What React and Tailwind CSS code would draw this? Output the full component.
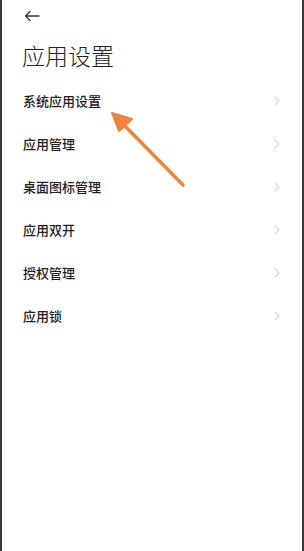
export default function App() {
  const items = ["系统应用设置", "应用管理", "桌面图标管理", "应用双开", "授权管理", "应用锁"];
  return (
    <div className="relative w-[304px] h-[551px] bg-white border-l-2 border-r-2 border-[#3a3a3a] overflow-hidden" style={{ fontFamily: '"Noto Sans CJK SC", "Noto Sans", sans-serif' }}>
      <div className="pl-[22px] pt-[10px] h-[14px] box-content">
        <svg width="16" height="12" viewBox="0 0 16 12" fill="none" stroke="#333" strokeWidth="1.3" strokeLinecap="round" strokeLinejoin="round">
          <path d="M15 6H1.5M6 1.5L1.5 6L6 10.5" />
        </svg>
      </div>
      <div className="pl-[20px] pt-[14px] text-[23px] leading-[34px] font-light text-[#222]">应用设置</div>
      <div className="mt-[7px]">
        {items.map((t) => (
          <div key={t} className="flex items-center justify-between h-[43px] pl-[21px] pr-[22px]">
            <span className="text-[13px] font-medium text-[#222]">{t}</span>
            <svg width="6" height="10" viewBox="0 0 6 10" fill="none" stroke="#c4c4c4" strokeWidth="1" strokeLinecap="round" strokeLinejoin="round">
              <path d="M1 1L5 5L1 9" />
            </svg>
          </div>
        ))}
      </div>
      <svg className="absolute left-0 top-0" width="304" height="551" viewBox="0 0 304 551">
        <line x1="181" y1="185" x2="120" y2="123" stroke="#f0843a" strokeWidth="3.5" strokeLinecap="round" />
        <polygon points="110,113 130,119 117,131" fill="#f0843a" stroke="#f0843a" strokeWidth="2" strokeLinejoin="round" />
      </svg>
    </div>
  );
}
